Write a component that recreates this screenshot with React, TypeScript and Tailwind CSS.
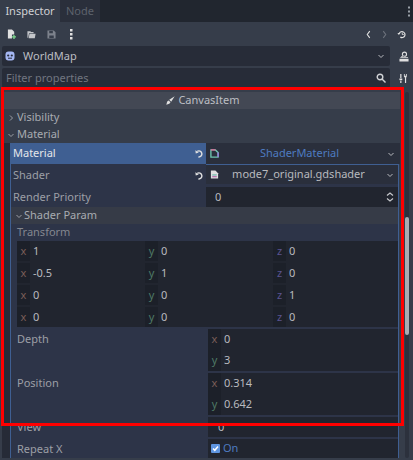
import React from 'react';

const font = { fontFamily: '"Noto Sans", sans-serif' };

function Chevron({ open, className = '' }: { open?: boolean; className?: string }) {
  return (
    <svg width="8" height="8" viewBox="0 0 8 8" className={className} fill="none" stroke="currentColor" strokeWidth="1">
      {open ? <path d="M1.500 3l2.500 2.500L6.500 3" /> : <path d="M3 1.500L5.500 4 3 6.500" />}
    </svg>
  );
}

function Revert() {
  return (
    <svg width="9" height="9" viewBox="0 0 12 12" fill="none" stroke="#e0e0e0" strokeWidth="1.900">
      <path d="M3 3.200A4 4 0 1 1 4.500 10.500" />
      <path d="M0.500 1.500l0.500 4.500 4-1.500z" strokeWidth="0" fill="#e0e0e0" />
    </svg>
  );
}

function Axis({ axis, value, wide }: { axis: 'x' | 'y' | 'z'; value: string; wide?: boolean }) {
  const color = axis === 'x' ? 'text-[#7b5e58]' : axis === 'y' ? 'text-[#4f7a66]' : 'text-[#5a5390]';
  return (
    <div className={wide ? 'flex h-[21px] items-center' : 'flex h-[22px] items-center pb-[2px]'}>
      <span className={`flex h-full w-[13px] shrink-0 items-center justify-center bg-[#1c2029] text-[11px] ${color}`}>{axis}</span>
      <span className="ml-[3px] text-[11px] text-[#b8babf]">{value}</span>
    </div>
  );
}

function Row({ label, h, children }: { label: string; h: string; children?: React.ReactNode }) {
  return (
    <div className={`flex ${h} items-stretch`}>
      <div className="flex h-[21px] w-[197px] shrink-0 items-center pl-[6px] text-[11px] text-[#9c9fa6]">{label}</div>
      <div className="flex-1">{children}</div>
    </div>
  );
}

export default function App() {
  const grid = [
    ['1', '0', '0'],
    ['-0.5', '1', '0'],
    ['0', '0', '1'],
    ['0', '0', '0'],
  ];

  return (
    <div className="relative h-[460px] w-[413px] overflow-hidden bg-[#363d4a]" style={font}>
      {/* Tabs */}
      <div className="flex h-[22px] bg-[#21262f] text-[11px]">
        <div className="flex w-[60px] items-center justify-center bg-[#363d4a] text-[#cfd0d4]">Inspector</div>
        <div className="flex w-[40px] items-center justify-center bg-[#2a2f3b] text-[#5d626c]">Node</div>
        <div className="flex flex-1 items-center justify-end pr-[2px]">
          <svg width="4" height="11" viewBox="0 0 4 11" fill="#9aa0a8">
            <rect x="1" y="0.500" width="2" height="2" /><rect x="1" y="4.500" width="2" height="2" /><rect x="1" y="8.500" width="2" height="2" />
          </svg>
        </div>
      </div>

      {/* Toolbar */}
      <div className="flex h-[24px] items-center pl-[7px] pr-[7px]">
        <svg width="9" height="10" viewBox="0 0 10 11" className="mr-[11px]">
          <path d="M1 0.500h4.500L8 3v3H5.500v4.500H1z" fill="#e0e0e0" />
          <path d="M7 6.500h1.500V8H10v1.500H8.500V11H7V9.500H5.500V8H7z" fill="#7fd88f" />
        </svg>
        <svg width="9" height="9" viewBox="0 0 11 10" className="mr-[11px]" fill="#c4c6ca">
          <path d="M0.500 1h3.500l1 1h3v1.500H2.500L1.500 9H0.500z" />
          <path d="M3 4h7.500L9.500 9.500H2z" />
        </svg>
        <svg width="9" height="9" viewBox="0 0 10 10" className="mr-[14px]" fill="#7d828c">
          <path d="M0.500 0.500h7l2 2v7h-9zM2.500 1v2.500h4V1zM2.500 6v3h5V6z" fillRule="evenodd" />
        </svg>
        <svg width="3" height="11" viewBox="0 0 3 11" fill="#e0e0e0">
          <rect x="0" y="0" width="2.500" height="2.500" /><rect x="0" y="4" width="2.500" height="2.500" /><rect x="0" y="8" width="2.500" height="2.500" />
        </svg>
        <div className="ml-auto flex items-center">
          <svg width="5" height="9" viewBox="0 0 6 10" fill="none" stroke="#e0e0e0" strokeWidth="1.300" className="mr-[11px]"><path d="M4.500 1L1.500 5l3 4" /></svg>
          <svg width="5" height="9" viewBox="0 0 6 10" fill="none" stroke="#6d727c" strokeWidth="1.300" className="mr-[10px]"><path d="M1.500 1l3 4-3 4" /></svg>
          <svg width="9" height="9" viewBox="0 0 12 11" fill="none" stroke="#e0e0e0" strokeWidth="1.600">
            <path d="M3 4a4 4 0 1 1 1.500 5" />
            <path d="M0.500 3.500h4L2.500 6z" fill="#e0e0e0" strokeWidth="0" />
            <path d="M7 3v2.500h2" strokeWidth="1.200" />
          </svg>
        </div>
      </div>

      {/* Object row */}
      <div className="flex h-[20px] items-center pl-[2px] pr-[3px]">
        <div className="flex h-full flex-1 items-center rounded-[2px] bg-[#272c38] pl-[3px] pr-[5px]">
          <svg width="10" height="10" viewBox="0 0 10 10" className="mr-[8px]">
            <rect x="0.500" y="0.500" width="9" height="9" rx="3" fill="#a5b7f3" />
            <circle cx="3.200" cy="4.500" r="1.100" fill="#272c38" /><circle cx="6.800" cy="4.500" r="1.100" fill="#272c38" />
            <path d="M3 7.200h4" stroke="#272c38" />
          </svg>
          <span className="text-[11px] text-[#bcbec3]">WorldMap</span>
          <Chevron open className="ml-auto text-[#b8babf]" />
        </div>
        <div className="flex w-[20px] shrink-0 justify-end pr-[1px]">
          <svg width="10" height="11" viewBox="0 0 11 11" fill="#e0e0e0">
            <circle cx="6" cy="3" r="2.300" fill="none" stroke="#e0e0e0" strokeWidth="1.200" />
            <path d="M3.500 4.800L1 7h9V6H4.500z" />
            <rect x="0.500" y="8" width="10" height="3" />
          </svg>
        </div>
      </div>

      {/* Filter row */}
      <div className="mt-[2px] flex h-[20px] items-center pl-[2px] pr-[3px]">
        <div className="flex h-full flex-1 items-center rounded-[2px] bg-[#272c38] pl-[4px] pr-[4px]">
          <span className="text-[11px] text-[#717680]">Filter properties</span>
          <svg width="10" height="10" viewBox="0 0 10 10" fill="none" stroke="#d0d2d6" strokeWidth="1.400" className="ml-auto">
            <circle cx="4" cy="4" r="2.800" /><path d="M6 6l3.500 3.500" />
          </svg>
        </div>
        <div className="flex w-[20px] shrink-0 justify-end pr-[2px]">
          <svg width="9" height="11" viewBox="0 0 11 12" fill="#e0e0e0">
            <rect x="1.500" y="0.500" width="1.500" height="5" /><rect x="0.500" y="6" width="3.500" height="2" /><rect x="1.500" y="8.500" width="1.500" height="3" />
            <path d="M6 0.500h1v2h1.500v-2h1v3L8.700 5v6.500H7.300V5L6 3.500z" />
          </svg>
        </div>
      </div>

      {/* Property list */}
      <div className="mt-[4px] flex">
        <div className="ml-[2px] w-[398px]">
          <div className="flex h-[17px] items-center justify-center bg-[#434854] pl-[4px] text-[11px] text-[#bcbec3]">
            <svg width="9" height="9" viewBox="0 0 9 9" fill="#e0e0e0" className="mr-[3px]">
              <path d="M8.700 0.300L3.200 3.800l2 2zM2.700 4.500L1.200 5.500 0.300 8.700 3.300 7.800l1.200-1.500z" />
            </svg>
            CanvasItem
          </div>
          <div className="flex h-[17px] items-center pl-[5px] text-[11px] text-[#a8abb1]">
            <Chevron className="mr-[2px] text-[#9c9fa6]" />Visibility
          </div>
          <div className="flex h-[17px] items-center pl-[5px] text-[11px] text-[#a8abb1]">
            <Chevron open className="mr-[2px] text-[#9c9fa6]" />Material
          </div>

          <div className="flex">
            <div className="w-[8px] shrink-0 bg-[#262b37]" />
            <div className="min-w-0 flex-1 border-l border-[#3f5f92]">
              {/* Material */}
              <div className="flex h-[21px] items-stretch">
                <div className="flex w-[195px] shrink-0 items-center bg-[#3f5f92] pl-[2px] pr-[2px] text-[11px] text-[#e4e6ea]">
                  Material
                  <span className="ml-auto flex"><Revert /></span>
                </div>
                <div className="flex flex-1 items-center bg-[#2a2f3c] pl-[4px] pr-[5px] text-[11px] text-[#4e7bc0]">
                  <svg width="9" height="9" viewBox="0 0 10 10" fill="none" strokeWidth="1.500" className="shrink-0">
                    <path d="M1 1h5l3 3v5H1z" stroke="#6ec6b0" />
                    <path d="M1 1h5" stroke="#e06d9a" /><path d="M9 4v5" stroke="#9a7ae0" />
                  </svg>
                  <span className="flex-1 pr-[7px] text-center">ShaderMaterial</span>
                  <Chevron open className="text-[#b8babf]" />
                </div>
              </div>

              <div className="mr-[1px] border-r border-[#3f5f92] bg-[#2d3448]">
                {/* Shader */}
                <div className="flex h-[23px] items-stretch">
                  <div className="flex w-[195px] shrink-0 items-center pl-[2px] pr-[2px] pb-[1px] text-[11px] text-[#9c9fa6]">
                    Shader
                    <span className="ml-auto flex"><Revert /></span>
                  </div>
                  <div className="flex-1 border-t border-[#3f5f92] pb-[3px]">
                    <div className="flex h-[19px] items-center bg-[#2a2f3c] pl-[4px] pr-[4px] text-[11px] text-[#b8babf]">
                      <svg width="9" height="9" viewBox="0 0 10 10" fill="#e0e0e0" className="shrink-0">
                        <path d="M1 0.500h5l3 3v6H1z" />
                        <rect x="2.500" y="5" width="5" height="1" fill="#4a9" /><rect x="2.500" y="7" width="5" height="1" fill="#a49" />
                      </svg>
                      <span className="flex-1 pr-[8px] text-center">mode7_original.gdshader</span>
                      <Chevron open className="text-[#b8babf]" />
                    </div>
                  </div>
                </div>

                {/* Render Priority */}
                <div className="flex h-[20px] items-stretch">
                  <div className="flex w-[195px] shrink-0 items-center pl-[2px] text-[11px] text-[#9c9fa6]">Render Priority</div>
                  <div className="flex flex-1 items-center bg-[#21252f] pl-[9px] pr-[4px] text-[11px] text-[#b8babf]">
                    0
                    <svg width="8" height="10" viewBox="0 0 8 10" fill="none" stroke="#c6c8cc" strokeWidth="1.200" className="ml-auto">
                      <path d="M1 3.500L4 1l3 2.500M1 6.500L4 9l3-2.500" />
                    </svg>
                  </div>
                </div>

                {/* Shader Param */}
                <div className="flex h-[17px] items-center bg-[#363b47] pl-[4px] text-[11px] text-[#a8abb1]">
                  <Chevron open className="mr-[1px] text-[#9c9fa6]" />Shader Param
                </div>
                <div className="flex h-[17px] items-center pl-[6px] text-[11px] text-[#84878f]">Transform</div>

                {/* Transform grid */}
                <div className="ml-[6px] grid h-[86px] grid-cols-[128px_128px_1fr] bg-[#21252f]">
                  {grid.map((r, i) => (
                    <React.Fragment key={i}>
                      <Axis axis="x" value={r[0]} />
                      <Axis axis="y" value={r[1]} />
                      <Axis axis="z" value={r[2]} />
                    </React.Fragment>
                  ))}
                </div>

                <div className="mt-[2px]">
                  <Row label="Depth" h="h-[42px]">
                    <div className="h-full bg-[#21252f]">
                      <Axis axis="x" value="0" wide />
                      <Axis axis="y" value="3" wide />
                    </div>
                  </Row>
                </div>
                <div className="mt-[2px]">
                  <Row label="Position" h="h-[42px]">
                    <div className="h-full bg-[#21252f]">
                      <Axis axis="x" value="0.314" wide />
                      <Axis axis="y" value="0.642" wide />
                    </div>
                  </Row>
                </div>
                <div className="mt-[2px]">
                  <Row label="View" h="h-[20px]">
                    <div className="flex h-full items-center bg-[#21252f] pl-[10px] text-[11px] text-[#b8babf]">0</div>
                  </Row>
                </div>
                <div className="mt-[2px]">
                  <Row label="Repeat X" h="h-[19px]">
                    <div className="flex h-full items-center bg-[#21252f] pl-[3px] text-[11px] text-[#4e7bc0]">
                      <svg width="9" height="9" viewBox="0 0 9 9" className="mr-[3px]">
                        <rect width="9" height="9" rx="1" fill="#5f95e0" />
                        <path d="M2 4.500l1.800 1.800L7 2.500" fill="none" stroke="#fff" strokeWidth="1.500" />
                      </svg>
                      On
                    </div>
                  </Row>
                </div>
              </div>
            </div>
          </div>
        </div>

        {/* Scrollbar */}
        <div className="relative ml-[5px] h-[366px] w-[4px] rounded-[2px] bg-[#2c313d]">
          <div className="absolute left-0 top-[125px] h-[118px] w-[4px] rounded-[2px] bg-[#a8acb3]" />
        </div>
      </div>

      {/* Red highlight drawn over the screenshot */}
      <div className="pointer-events-none absolute left-[1px] top-[87px] h-[339px] w-[403px] border-[3px] border-[#ff0000]" />
    </div>
  );
}
